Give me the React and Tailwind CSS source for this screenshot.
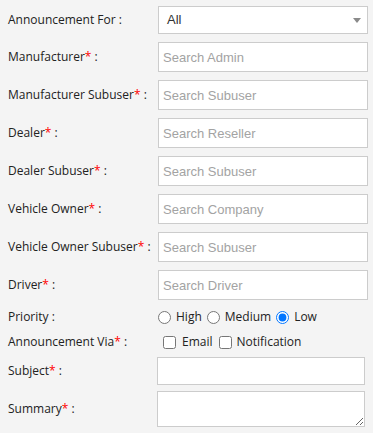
import React from "react";

const req = <span className="text-[#ff0000]">*</span>;

function Label({ children, w = "w-[150px]" }) {
  return <div className={`${w} shrink-0 leading-none`}>{children}</div>;
}

function SearchRow({ label, placeholder }) {
  return (
    <div className="mt-[8px] flex h-[30px] items-center">
      <Label>
        {label}
        {req} :
      </Label>
      <input
        type="text"
        placeholder={placeholder}
        className="h-[30px] w-[210px] border border-[#cccccc] bg-white px-[4px] font-['Liberation_Sans',Arial,sans-serif] text-[13px] text-[#333] outline-none placeholder:text-[#a3a3a3]"
      />
    </div>
  );
}

export default function App() {
  return (
    <div className="min-h-screen bg-[#f4f4f4] pl-2 pt-[6px] font-['Open_Sans',sans-serif] text-[12px] text-[#222]">
      <div className="flex h-[28px] items-center">
        <Label>Announcement For :</Label>
        <div className="flex h-[28px] w-[210px] items-center justify-between border border-[#cccccc] bg-white pl-[8px] pr-[6px] font-['Liberation_Sans',Arial,sans-serif] text-[13px] text-[#333]">
          <span>All</span>
          <svg width="8" height="5" viewBox="0 0 8 5">
            <path d="M0 0 L8 0 L4 5 Z" fill="#8a8a8a" />
          </svg>
        </div>
      </div>

      <SearchRow label="Manufacturer" placeholder="Search Admin" />
      <SearchRow label="Manufacturer Subuser" placeholder="Search Subuser" />
      <SearchRow label="Dealer" placeholder="Search Reseller" />
      <SearchRow label="Dealer Subuser" placeholder="Search Subuser" />
      <SearchRow label="Vehicle Owner" placeholder="Search Company" />
      <SearchRow label="Vehicle Owner Subuser" placeholder="Search Subuser" />
      <SearchRow label="Driver" placeholder="Search Driver" />

      <div className="mt-[8px] flex h-[18px] items-center">
        <Label>Priority :</Label>
        <label className="flex items-center">
          <input type="radio" name="priority" className="h-[13px] w-[13px]" />
          <span className="ml-[5px]">High</span>
        </label>
        <label className="ml-[5px] flex items-center">
          <input type="radio" name="priority" className="h-[13px] w-[13px]" />
          <span className="ml-[5px]">Medium</span>
        </label>
        <label className="ml-[5px] flex items-center">
          <input type="radio" name="priority" defaultChecked className="h-[13px] w-[13px]" />
          <span className="ml-[5px]">Low</span>
        </label>
      </div>

      <div className="mt-[7px] flex h-[18px] items-center">
        <Label>Announcement Via{req} :</Label>
        <label className="ml-[5px] flex items-center">
          <input type="checkbox" className="h-[13px] w-[13px]" />
          <span className="ml-[6px]">Email</span>
        </label>
        <label className="ml-[6px] flex items-center">
          <input type="checkbox" className="h-[13px] w-[13px]" />
          <span className="ml-[5px]">Notification</span>
        </label>
      </div>

      <div className="mt-[6px] flex h-[28px] items-center">
        <Label w="w-[149px]">Subject{req} :</Label>
        <input
          type="text"
          className="h-[28px] w-[208px] border border-[#cccccc] bg-white px-[4px] text-[13px] outline-none"
        />
      </div>

      <div className="mt-[6px] flex h-[36px] items-center">
        <Label w="w-[149px]">Summary{req} :</Label>
        <textarea className="h-[36px] w-[208px] border border-[#cccccc] bg-white px-[4px] text-[13px] outline-none" />
      </div>
    </div>
  );
}
